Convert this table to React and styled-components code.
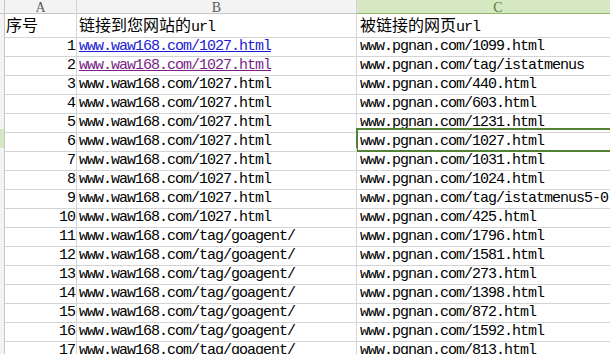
import React from "react";
import styled, { createGlobalStyle, css } from "styled-components";

const Global = createGlobalStyle`
  html, body { margin: 0; padding: 0; background: #ffffff; overflow: hidden; }
  body { width: 610px; height: 354px; }
`;

const COLS = "5px 72px 280px 283px";
const GRID = "#d4d4d4";
const SEL = "#548235";
const SEL_BG = "#d5e8c2";
const HEAD_BG = "#f3f3f3";

const Sheet = styled.div`
  display: flex;
  flex-direction: column;
  width: 640px;
`;

const HeaderRow = styled.div`
  display: grid;
  grid-template-columns: ${COLS};
  height: 14px;
`;

const Corner = styled.div`
  background: ${HEAD_BG};
  border-right: 1px solid #c6c6c6;
  border-bottom: 1px solid #c6c6c6;
`;

const ColHead = styled.div`
  box-sizing: border-box;
  background: ${(p) => (p.$active ? SEL_BG : HEAD_BG)};
  border-right: 1px solid ${GRID};
  border-bottom: 1px solid ${(p) => (p.$active ? "#8fb76c" : "#c6c6c6")};
  color: ${(p) => (p.$active ? "#4f7f2e" : "#5a5a5a")};
  font-family: "Liberation Serif", serif;
  font-size: 14px;
  line-height: 13px;
  padding-top: 1px;
  text-align: center;
  overflow: hidden;
`;

const Row = styled.div`
  display: grid;
  grid-template-columns: ${COLS};
  height: ${(p) => p.$h}px;
`;

const RowHead = styled.div`
  background: ${(p) => (p.$active ? SEL_BG : HEAD_BG)};
  border-right: 1px solid #c6c6c6;
  border-bottom: 1px solid ${GRID};
`;

const Cell = styled.div`
  position: relative;
  box-sizing: border-box;
  border-right: 1px solid ${GRID};
  border-bottom: 1px solid ${GRID};
  padding-top: ${(p) => p.$top || 0}px;
  padding-left: ${(p) => p.$left || 0}px;
  padding-right: ${(p) => (p.$right ? 1 : 0)}px;
  text-align: ${(p) => (p.$right ? "right" : "left")};
  font-family: "Liberation Mono", "Noto Sans CJK SC", monospace;
  font-size: 15px;
  letter-spacing: -1px;
  line-height: 18px;
  color: #000;
  white-space: nowrap;
  ${(p) =>
    p.$selected &&
    css`
      &::after {
        content: "";
        position: absolute;
        top: -1px;
        left: -1px;
        right: -1px;
        bottom: -1px;
        border: 2px solid ${SEL};
        pointer-events: none;
      }
    `}
`;

const Cjk = styled.span`
  font-family: "Noto Sans CJK SC", sans-serif;
  font-size: 16px;
  letter-spacing: 0;
`;

const Link = styled.span`
  color: ${(p) => (p.$visited ? "#7b1f86" : "#1d1ad6")};
  text-decoration: underline;
  text-underline-offset: 1px;
`;

const a1 = "www.waw168.com/1027.html";
const a2 = "www.waw168.com/tag/goagent/";
const p = (s) => `www.pgnan.com/${s}`;

const rows = [
  [a1, p("1099.html"), "link"],
  [a1, p("tag/istatmenus"), "visited"],
  [a1, p("440.html")],
  [a1, p("603.html")],
  [a1, p("1231.html")],
  [a1, p("1027.html")],
  [a1, p("1031.html")],
  [a1, p("1024.html")],
  [a1, p("tag/istatmenus5-0")],
  [a1, p("425.html")],
  [a2, p("1796.html")],
  [a2, p("1581.html")],
  [a2, p("273.html")],
  [a2, p("1398.html")],
  [a2, p("872.html")],
  [a2, p("1592.html")],
  [a2, p("813.html")],
];

export default function App() {
  return (
    <>
      <Global />
      <Sheet>
        <HeaderRow>
          <Corner />
          <ColHead>A</ColHead>
          <ColHead>B</ColHead>
          <ColHead $active>C</ColHead>
        </HeaderRow>
        <Row $h={20}>
          <RowHead />
          <Cell $top={1} $left={1}>
            <Cjk>序号</Cjk>
          </Cell>
          <Cell $top={1} $left={2}>
            <Cjk>链接到您网站的</Cjk>url
          </Cell>
          <Cell $top={1} $left={3}>
            <Cjk>被链接的网页</Cjk>url
          </Cell>
        </Row>
        {rows.map(([b, c, kind], i) => {
          const n = i + 1;
          const sel = n === 6;
          return (
            <Row key={n} $h={19}>
              <RowHead $active={sel} />
              <Cell $top={4} $right>
                {n}
              </Cell>
              <Cell $top={4} $left={2}>
                {kind ? <Link $visited={kind === "visited"}>{b}</Link> : b}
              </Cell>
              <Cell $top={4} $left={3} $selected={sel}>
                {c}
              </Cell>
            </Row>
          );
        })}
      </Sheet>
    </>
  );
}
